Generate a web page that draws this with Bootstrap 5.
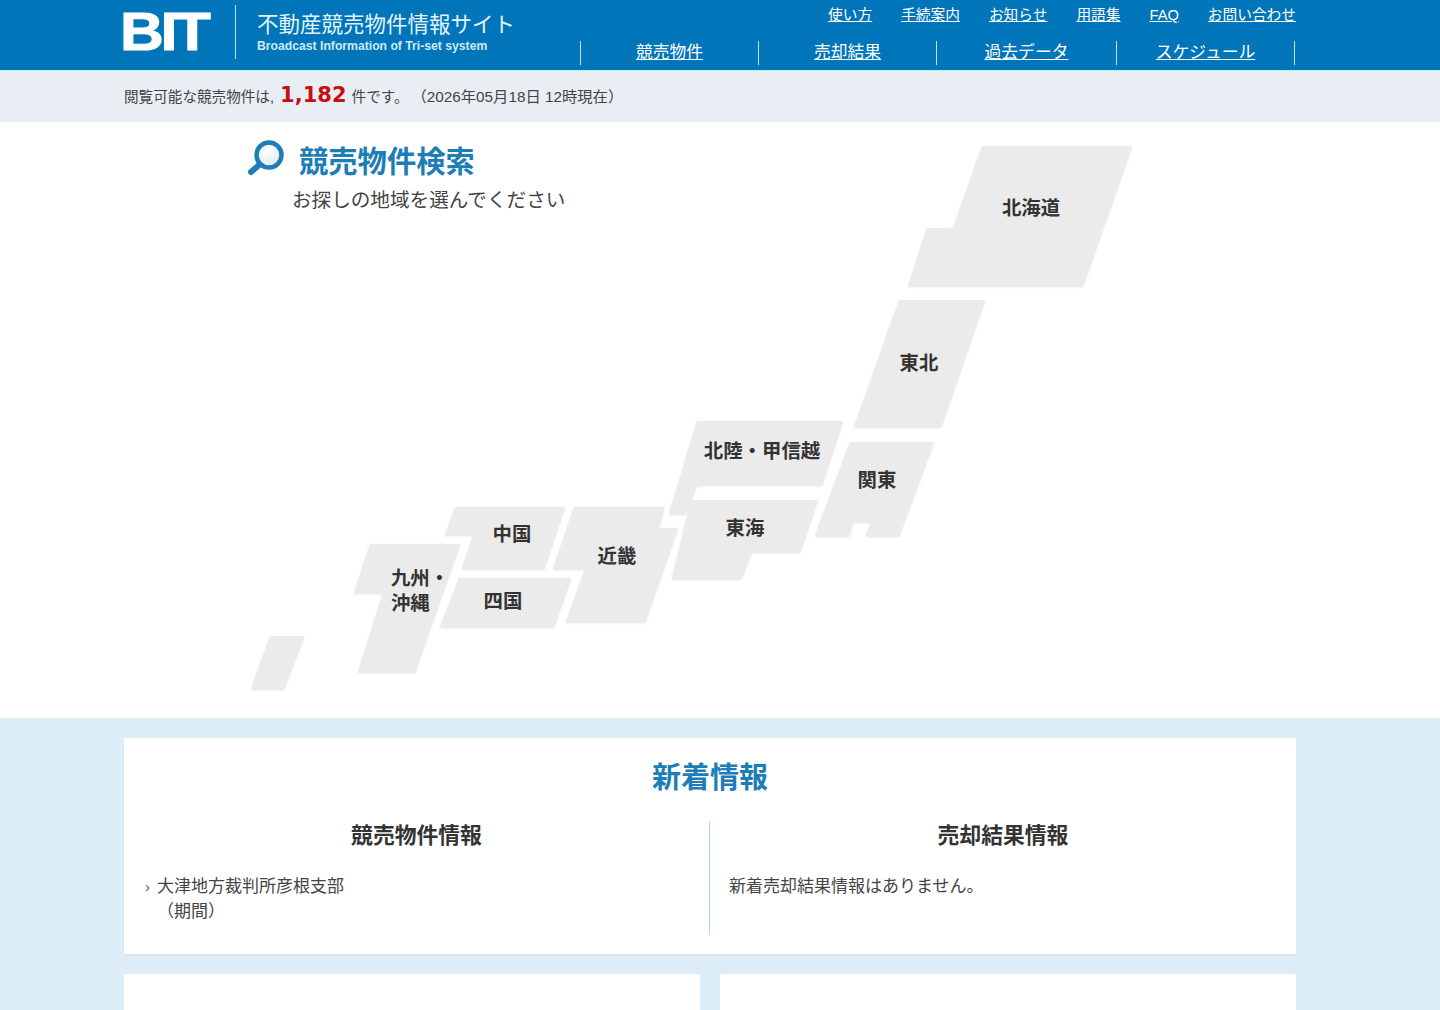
<!DOCTYPE html>
<html lang="ja">
<head>
    <meta charset="UTF-8">
    <meta name="viewport" content="width=device-width, initial-scale=1.0">
    <title>BIT 不動産競売物件情報サイト</title>
    <link href="https://cdn.jsdelivr.net/npm/bootstrap@5.3.0/dist/css/bootstrap.min.css" rel="stylesheet">
    <script src="https://cdn.jsdelivr.net/npm/bootstrap@5.3.0/dist/js/bootstrap.bundle.min.js"></script>
    <style>
        body {
            font-family: "Liberation Sans", "Noto Sans CJK JP", sans-serif;
            color: #333;
            background-color: #fff;
            text-spacing-trim: space-all;
        }
        .site-wrap { width: 1172px; margin-left: 124px; }
        .site-header {
            height: 71px;
            background-color: #0075b9;
            border-bottom: 1px solid #c4ecf8;
        }
        .site-header a { color: #fff; }
        .brand-logo {
            width: 88px;
            height: 38px;
            margin-top: 13px;
            font: bold 53px/38px "Liberation Sans", sans-serif;
            color: #fff;
            letter-spacing: -3px;
            -webkit-text-stroke: 1px #fff;
            transform: translateX(-4px) scaleX(1.145);
            transform-origin: left center;
        }
        .brand-text {
            margin-left: 23px;
            margin-top: 5px;
            height: 54px;
            padding-left: 21px;
            border-left: 1px solid #bfe3f3;
        }
        .brand-title { font-size: 21.5px; line-height: 26px; margin-top: 7px; color: #e4f4fb; }
        .brand-sub { font-size: 12.2px; line-height: 15px; margin-top: 1px; font-weight: bold; color: #cfeaf6; }
        .top-links { gap: 29px; font-size: 14.7px; line-height: 20px; padding-top: 5px; }
        .main-links { margin: 16px 1px 0 0; font-size: 16.8px; line-height: 24px; border-left: 1px solid #bfe3f3; }
        .main-links a { display: block; text-align: center; border-right: 1px solid #bfe3f3; }
        .main-links a:nth-child(1), .main-links a:nth-child(2) { width: 178px; }
        .main-links a:nth-child(3) { width: 180px; }
        .main-links a:nth-child(4) { width: 178px; }
        .info-bar {
            height: 51px;
            background-color: #e8eef4;
            font-size: 14.6px;
            line-height: 52px;
            color: #444;
        }
        .info-count {
            font: bold 21px "DejaVu Sans", sans-serif;
            color: #c80f0f;
            margin: 0 1px 0 2px;
        }
        .info-date { font-size: 15.3px; margin-left: 3px; }
        .map-area { height: 596px; }
        .map-canvas { position: absolute; left: 0; top: 0; }
        .map-canvas polygon { fill: #ebebeb; filter: drop-shadow(0 1px 1px rgba(0, 0, 0, .12)); }
        .map-label {
            position: absolute;
            transform: translate(-50%, -50%);
            font-size: 19.4px;
            line-height: 25px;
            font-weight: bold;
            color: #333;
            white-space: nowrap;
        }
        .search-head { padding: 18px 0 0 122px; }
        .search-icon { margin-top: -1px; }
        .search-title { font-size: 29.3px; line-height: 40px; font-weight: bold; color: #1d7db7; margin: 2px 0 0 13px; }
        .search-sub { font-size: 19.6px; line-height: 30px; margin: 3px 0 0 46px; color: #444; }
        .lower-area { height: 292px; background-color: #dcedf7; padding-top: 20px; }
        .news-box { height: 216px; background-color: #fff; box-shadow: 0 1px 2px rgba(0, 0, 0, .05); }
        .news-title { font-size: 29px; line-height: 40px; font-weight: bold; color: #1d7db7; text-align: center; padding-top: 20px; margin: 0; }
        .news-cols { height: 114px; margin-top: 23px; }
        .news-col-left { width: 586px; border-right: 1px solid #b5d5e5; padding: 1px 0 0 21px; }
        .news-col-right { width: 586px; padding: 1px 0 0 19px; }
        .news-sub { font-size: 21.8px; line-height: 28px; font-weight: bold; color: #333; text-align: center; margin: 0 0 24px; }
        .news-col-left .news-sub { margin-left: -21px; }
        .news-col-right .news-sub { margin-left: -19px; }
        .news-text { font-size: 17px; line-height: 25px; color: #444; margin: 0; }
        .news-chevron { display: inline-block; width: 12px; font-size: 15px; color: #555; }
        .news-indent { padding-left: 12px; }
        .sub-row { gap: 20px; margin-top: 20px; }
        .sub-box { flex: 1; height: 36px; background-color: #fff; }
    </style>
</head>
<body>
    <header class="site-header">
        <div class="site-wrap d-flex justify-content-between">
            <div class="d-flex">
                <div class="brand-logo">BIT</div>
                <div class="brand-text">
                    <div class="brand-title">不動産競売物件情報サイト</div>
                    <div class="brand-sub">Broadcast Information of Tri-set system</div>
                </div>
            </div>
            <div>
                <div class="top-links d-flex justify-content-end">
                    <a href="#">使い方</a>
                    <a href="#">手続案内</a>
                    <a href="#">お知らせ</a>
                    <a href="#">用語集</a>
                    <a href="#">FAQ</a>
                    <a href="#">お問い合わせ</a>
                </div>
                <div class="main-links d-flex">
                    <a href="#">競売物件</a>
                    <a href="#">売却結果</a>
                    <a href="#">過去データ</a>
                    <a href="#">スケジュール</a>
                </div>
            </div>
        </div>
    </header>

    <div class="info-bar">
        <div class="site-wrap">閲覧可能な競売物件は, <span class="info-count">1,182</span> 件です。<span class="info-date">（2026年05月18日 12時現在）</span></div>
    </div>

    <section class="map-area site-wrap position-relative">
        <!-- map coordinates are relative to the 1172 wide wrapper -->
        <svg class="map-canvas" width="1172" height="596" viewBox="124 122 1172 596">
            <polygon points="982,146 1132,146 1083,286 908,286 927,228 953,228"/>
            <polygon points="899,300 985,300 941,427 854,427"/>
            <polygon points="850,442 934,442 899,536 866,536 871,522 853,522 849,536 815,536"/>
            <polygon points="697,421 843,421 822,485 697,485 685,514 669,514"/>
            <polygon points="691,500 818,500 800,552 752,552 741,579 672,579"/>
            <polygon points="574,507 664,507 659,528 678,528 645,622 566,622 585,569 553,569"/>
            <polygon points="455,507 565,507 544,569 462,569 473,535 445,535"/>
            <polygon points="459,578 571,578 554,627 440,627"/>
            <polygon points="370,544 460,544 415,672 358,672 383,593 354,593"/>
            <polygon points="270,636 304,636 284,689 251,689"/>
        </svg>
        <span class="map-label" style="left: 907px; top: 86px">北海道</span>
        <span class="map-label" style="left: 795px; top: 241px">東北</span>
        <span class="map-label" style="left: 753px; top: 358px">関東</span>
        <span class="map-label" style="left: 638px; top: 329px">北陸・甲信越</span>
        <span class="map-label" style="left: 621px; top: 406px">東海</span>
        <span class="map-label" style="left: 493px; top: 434px">近畿</span>
        <span class="map-label" style="left: 388px; top: 412px">中国</span>
        <span class="map-label" style="left: 379px; top: 479px">四国</span>
        <span class="map-label" style="left: 296px; top: 469px">九州・<br>沖縄</span>

        <div class="search-head position-relative">
            <div class="d-flex align-items-start">
                <svg class="search-icon" width="40" height="38" viewBox="0 0 40 38">
                    <defs>
                        <radialGradient id="lensFill" cx="0.4" cy="0.35" r="0.8">
                            <stop offset="0" stop-color="#ffffff"/>
                            <stop offset="1" stop-color="#d5e6f1"/>
                        </radialGradient>
                    </defs>
                    <circle cx="23" cy="16" r="12.5" fill="url(#lensFill)" stroke="#1f7fb5" stroke-width="4.5"/>
                    <line x1="5" y1="33" x2="13" y2="26" stroke="#1f7fb5" stroke-width="6" stroke-linecap="round"/>
                </svg>
                <h1 class="search-title">競売物件検索</h1>
            </div>
            <p class="search-sub mb-0">お探しの地域を選んでください</p>
        </div>
    </section>

    <section class="lower-area">
        <div class="site-wrap">
            <div class="news-box">
                <h2 class="news-title">新着情報</h2>
                <div class="news-cols d-flex">
                    <div class="news-col-left">
                        <h3 class="news-sub">競売物件情報</h3>
                        <p class="news-text"><span class="news-chevron">›</span>大津地方裁判所彦根支部</p>
                        <p class="news-text news-indent">（期間）</p>
                    </div>
                    <div class="news-col-right">
                        <h3 class="news-sub">売却結果情報</h3>
                        <p class="news-text">新着売却結果情報はありません。</p>
                    </div>
                </div>
            </div>
            <div class="d-flex sub-row">
                <div class="sub-box"></div>
                <div class="sub-box"></div>
            </div>
        </div>
    </section>
</body>
</html>
